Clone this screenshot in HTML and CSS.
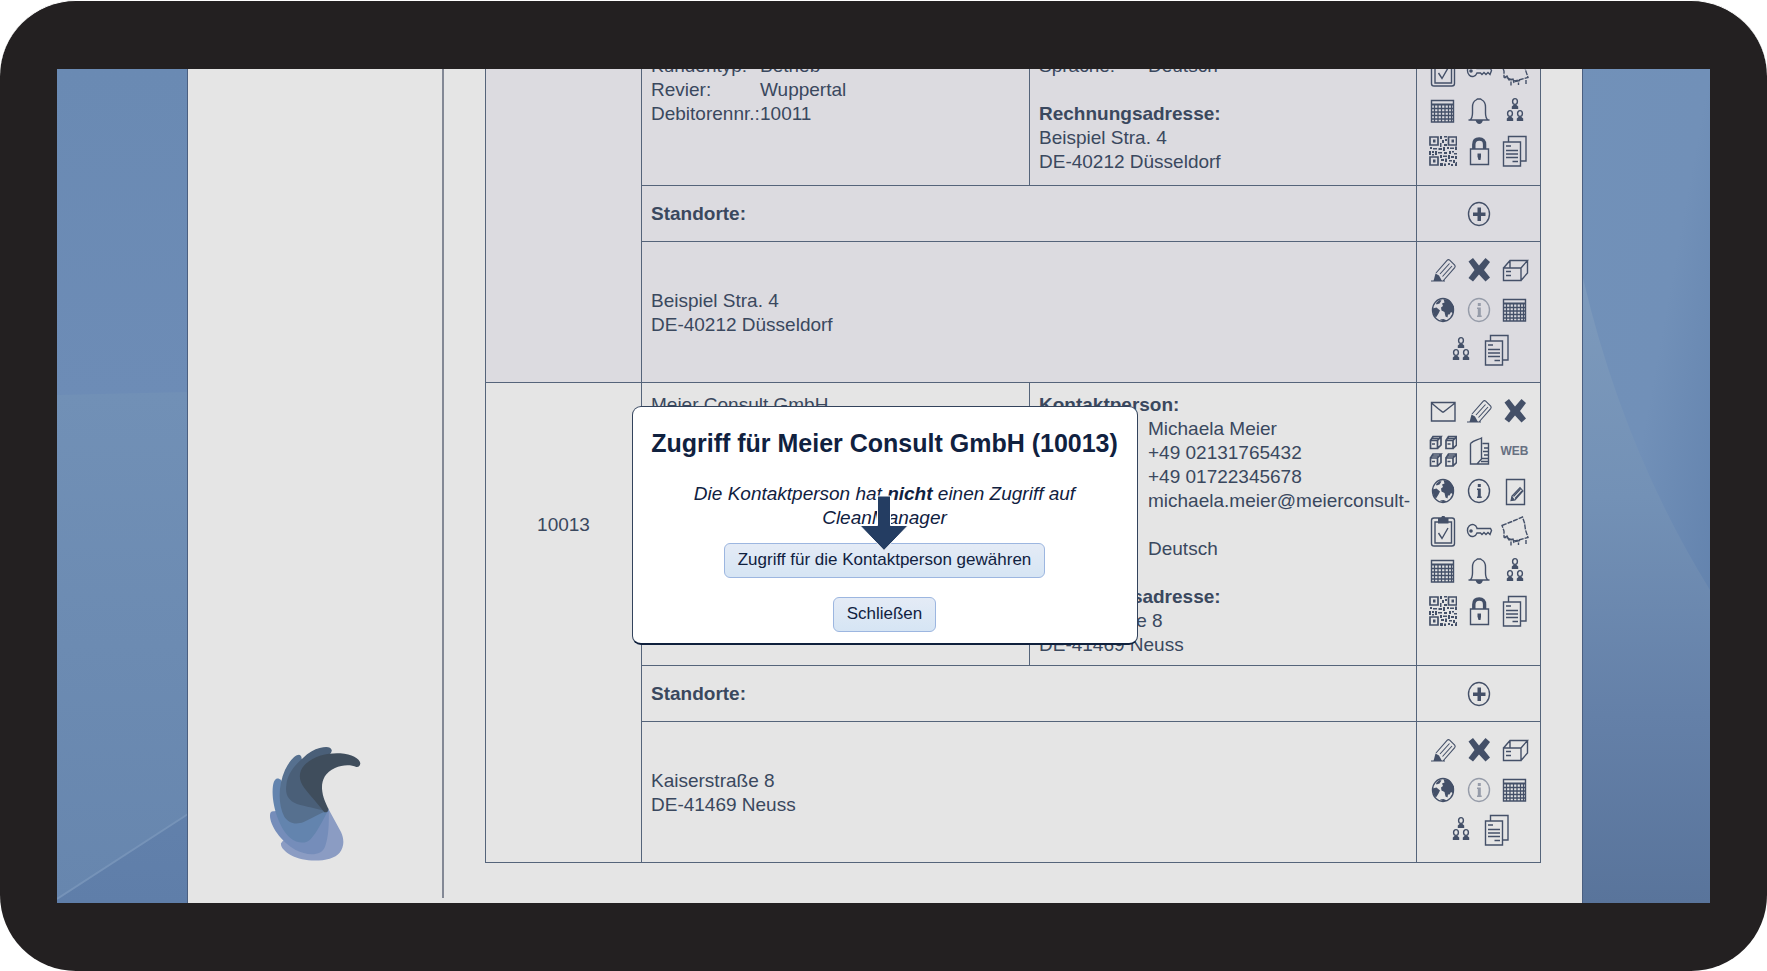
FILE: index.html
```html
<!DOCTYPE html>
<html lang="de">
<head>
<meta charset="utf-8">
<meta name="viewport" content="width=device-width, initial-scale=1">
<title>CleanManager – Kunden</title>
<link rel="stylesheet" href="styles.css">
</head>
<body>

<svg class="sprite" aria-hidden="true">
  <symbol id="i-mail" viewBox="0 0 28 32"><path class="ln" d="M2.500 7.500h23.500v18.500h-23.500zM2.500 8l6.500 5.500 4.500 3.500h1l4.500-3.500L26 8"/></symbol>
  <symbol id="i-pencil" viewBox="0 0 28 32"><path class="ln thin" d="M2 27h14M7 19 18.500 6q1-1 2.200.2l5 5q1 1.200 0 2.500L14 27M11 20 20.500 9.500M13.500 22.500 23 12"/><path class="fl" d="M6.500 19.500l3.500 2L13 27H4.500z"/></symbol>
  <symbol id="i-cross" viewBox="0 0 28 32"><path class="fl" d="M3.500 7.500 8 4l6 7.500L20.500 4l4.500 4-6 8 6 7.500-4.500 4L14 20.500 8 27.500 3.500 24l6-8z"/></symbol>
  <symbol id="i-boxes" viewBox="0 0 28 32"><g id="mini"><path class="ln bold" d="M1.500 5.500h7v8h-7zM1.500 5.500l2.500-4h8l-3.500 4M12 1.500v8.500l-3.500 3.500M3 9h3M3.500 3.500h6"/></g><use href="#mini" x="15.500"/><use href="#mini" y="17.500"/><use href="#mini" x="15.500" y="17.500"/></symbol>
  <symbol id="i-folder" viewBox="0 0 28 32"><path class="ln" d="M5.500 8.500v20.500h18V8.500h-6M5.500 8.500C9 5 13 5 16.500 3v21L12 29M19 13h4M18 16.500h5M19 20h4M17 23.500h6M16 26.500h7"/></symbol>
  <symbol id="i-globe" viewBox="0 0 28 32"><ellipse class="ln" cx="14" cy="16" rx="10.500" ry="11.500"/><path class="fl" d="M14.500 5l6 1.500 4.500 6-.5 7-2.500-1.500-1.500 2.500h-1.500l-.5 3-2-1-1-4.500-3-1.500-.5-3 2-1.500-1-2.500 2.500-1zM3.500 14.500l4-1 3.500 3-1.500 3-2.500 4-2.500-3zM7 9l3.500-3 2 .5-2 3-3 1zM11 25.500l3.500-.5 3.500 1.500-3.500 1z"/></symbol>
  <symbol id="i-info" viewBox="0 0 28 32"><ellipse class="ln" cx="14" cy="16" rx="10.500" ry="11.500"/><path class="fl" d="M12.800 9h3v3h-3zM12 13.500h3.800v8h.9v1.500H12v-1.500h.8V15H12z"/></symbol>
  <symbol id="i-note" viewBox="0 0 28 32"><path class="ln" d="M5.500 4.500h18v25h-18z"/><path class="ln thin" d="M10 25.500l1-4.500L19 12.500l3 3.500-8 9zM12.500 21.500l7-7.500M14 23.500l7-7.500"/><path class="fl" d="M10 25.500l1-4.500 3 4z"/></symbol>
  <symbol id="i-check" viewBox="0 0 28 32"><rect class="ln" x="2.500" y="3" width="23" height="28" rx="2.500"/><path class="ln" d="M6 7h16.500v21H6zM9.500 18l3.500 5.500L19 13"/><path class="fl" d="M9 3h3l1-2h2.500l1 2h3v5.500H9z"/></symbol>
  <symbol id="i-key" viewBox="0 0 28 32"><path class="ln" d="M12 13.500h13.500l1 2-1.500 4-2-2-2 2-2-2-2 2-1.500-1.500H12a5 6 0 1 1 0-5z"/><circle class="fl" cx="6" cy="16" r="1.800"/></symbol>
  <symbol id="i-cloth" viewBox="0 0 28 32"><path class="ln dash" d="M1 10.500 11 6.500 21.500 2l2 6 1 7 2.500 7.500L14 26 3 22 3 16z"/><path class="ln" d="M3 23l3-2 2 4 4-1 1 4M10 26.500v4M17.500 27.500v2.500M25 25v4M14 26.500l5-1"/></symbol>
  <symbol id="i-calendar" viewBox="0 0 28 32"><path class="ln" d="M2.500 5.500h22v21.500h-22z"/><path class="ln thick" d="M2 9.500h23"/><path class="ln grid" d="M5.500 9v18M9 9v18M12.500 9v18M16 9v18M19.500 9v18M22.500 9v18M2 13.500h23M2 17h23M2 20.500h23M2 24h23"/></symbol>
  <symbol id="i-bell" viewBox="0 0 28 32"><path class="ln" d="M3.500 25h21M5 25q2.500-2 2.500-7v-6q0-5 3.500-7l1.500-1h3l1.500 1q3.500 2 3.500 7v6q0 5 2.500 7"/><path class="fl" d="M10.500 25h7.500q-1 4-3.700 4t-3.800-4z"/></symbol>
  <symbol id="i-people" viewBox="0 0 28 32"><g id="man"><ellipse class="ln" cx="14" cy="6.500" rx="2.400" ry="2.900"/><path class="fl" d="M10.800 14v-2.500L13 9.500h2l2.200 2V14z"/></g><use href="#man" x="-5" y="12"/><use href="#man" x="5" y="12"/></symbol>
  <symbol id="i-qr" viewBox="0 0 28 32"><path class="ln bold" d="M1 2h8v8H1zM19.500 2h8v8h-8zM1 22h8v8H1z"/><path class="fl" d="M4 4.500h2.500v3H4zM22.500 4.500H25v3h-2.500zM4 24.500h2.500v3H4zM11 1h2v3h-2zM15 1h3v1.500h-3zM13 5h2v3h-2zM16 4h2v2h-2zM11 8h1.500v4H11zM15 9h3v2h-3zM1 12h2v2H1zM4 13h4v1.500H4zM9.500 13H13v2H9.500zM14 12h2v4h-2zM18 12h2v2h-2zM21 12.500h4V14h-4zM26 11.500h2V15h-2zM0 16h2v4H0zM3 16h2v2H3zM6 16h2v4H6zM9 17h4v1.500H9zM15 17h3v2h-3zM20 16h2v3h-2zM23 16h2v1.500h-2zM25 18h3v1.500h-3zM3 19h2v1.500H3zM11 20h2v3h-2zM14 20.500h4V22h-4zM19 20h2v4h-2zM22 21h3v2h-3zM26 21h2v3h-2zM12 24h3v2h-3zM16 23.500h2V27h-2zM20 25h3v1.500h-3zM24 25h2v3h-2zM11 28h3v3h-3zM15 28.500h2V31h-2zM19 28h2v2h-2zM22 29h2v2h-2zM27 27h1v4h-2v-2z"/></symbol>
  <symbol id="i-lock" viewBox="0 0 28 32"><path class="ln" d="M5.500 14h18v15.500h-18z"/><path class="ln shackle" d="M8.800 14V9.500q0-5.500 5.400-5.500t5.400 5.500V14"/><path class="fl" d="M12.500 18.500H16v3l-.5 3.500h-2l-1-3.500z"/></symbol>
  <symbol id="i-docs" viewBox="0 0 28 32"><path class="ln" d="M2.500 7h17v24h-17zM7.500 7V1.500h17.500V26h-5M5 11h5M5 15.500h12M5 19h12M5 22.500h12M11.500 26.500h5.500"/></symbol>
  <symbol id="i-plus" viewBox="0 0 28 32"><ellipse class="ln" cx="14" cy="16" rx="10.500" ry="11.500"/><path class="fl" d="M12.500 9.500H16v5h4.500V18H16v5h-3.500v-5H8v-3.500h4.500z"/></symbol>
  <symbol id="i-box" viewBox="0 0 28 32"><path class="ln" d="M2.500 14h17.500V26.500H2.500zM2.500 14 9 6.500h17.500L20 14M26.500 6.500v12.500L20 26.500M9 6.500V14M5 17.500h5M5 21.500h5"/></symbol>
</svg>

<div class="device">
  <div class="screen">
    <svg class="wallpaper" viewBox="0 0 1653 834" preserveAspectRatio="none" aria-hidden="true">
      <defs>
        <linearGradient id="sky" x1="0" y1="0" x2="0" y2="1"><stop offset="0" stop-color="#6a8ab3"/><stop offset=".4" stop-color="#6d8cb6"/><stop offset="1" stop-color="#5f7ea9"/></linearGradient>
        <linearGradient id="haze" x1="0" y1="0" x2="0" y2="1"><stop offset="0" stop-color="#7190b6"/><stop offset="1" stop-color="#6786ae"/></linearGradient>
        <linearGradient id="east" x1="0" y1="0" x2="1" y2="1"><stop offset="0" stop-color="#7191b9"/><stop offset=".5" stop-color="#7190b8"/><stop offset="1" stop-color="#5c7ca8"/></linearGradient>
        <linearGradient id="hill" x1="0" y1="0" x2="0" y2="1"><stop offset="0" stop-color="#7d9abc"/><stop offset=".35" stop-color="#7391b6"/><stop offset=".7" stop-color="#6480a8"/><stop offset="1" stop-color="#59749b"/></linearGradient>
      </defs>
      <rect width="900" height="834" fill="url(#sky)"/>
      <path d="M0 326 131 323V745L0 830z" fill="url(#haze)"/>
      <path d="M0 830 131 745" stroke="#7693b8" stroke-width="2"/>
      <rect x="1500" width="153" height="834" fill="url(#east)"/>
      <path d="M1526 209Q1566 380 1653 521V834H1500V209z" fill="url(#hill)"/>
    </svg>

    <div class="page">
      <aside class="sidebar">
        <svg class="logo" viewBox="120 134 276 348" role="img" aria-label="CleanManager">
          <path fill="#8b9cc3" d="M298 322 336 392C346 414 346 436 332 454C310 482 230 486 186 462C168 452 154 438 156 426L162 418 200 400z"/>
          <path fill="#758dba" d="M299 322C301 370 298 410 288 436C278 464 236 464 200 446C156 422 122 372 123 342C123 332 128 328 136 330L200 320z"/>
          <path fill="#6384ae" d="M298 326C280 360 262 396 246 412C230 430 204 426 184 410C150 380 128 310 131 262C133 236 140 230 150 232Q158 234 160 244L220 280z"/>
          <path fill="#56708f" d="M298 328C270 336 250 350 224 362C198 372 178 364 166 346C146 310 148 250 168 206C182 176 200 160 210 160Q218 162 218 172L240 240z"/>
          <path fill="#4a5f78" d="M296 332C262 320 230 316 204 308C178 298 168 280 172 252C174 222 192 196 222 170C238 154 256 144 272 140Q304 132 308 146Q310 154 300 160L260 240z"/>
          <path fill="#3f4d5c" d="M286 333C266 306 246 286 226 260C208 236 208 212 226 192C254 162 300 154 334 156C368 158 392 172 394 186Q393 198 382 197C366 190 340 190 318 200C288 214 278 236 279 262C281 288 290 304 298 322Q298 334 286 333z"/>
        </svg>
      </aside>

      <main class="content">
        <table class="customers">
          <colgroup><col class="c-id"><col class="c-data"><col><col class="c-tools"></colgroup>
          <tbody class="shaded">
            <tr class="head">
              <th rowspan="3" scope="rowgroup" aria-label="10011"></th>
              <td>
                <dl class="facts">
                  <dt>Kundentyp:</dt><dd>Betrieb</dd>
                  <dt>Revier:</dt><dd>Wuppertal</dd>
                  <dt>Debitorennr.:</dt><dd>10011</dd>
                </dl>
              </td>
              <td>
                <dl class="facts"><dt>Sprache:</dt><dd>Deutsch</dd></dl>
                <p class="address"><strong>Rechnungsadresse:</strong><br>Beispiel Stra. 4<br>DE-40212 Düsseldorf</p>
              </td>
              <td><div class="tools">
                <button aria-label="Aufgaben"><svg><use href="#i-check"/></svg></button>
                <button aria-label="Zugriff"><svg><use href="#i-key"/></svg></button>
                <button aria-label="Reinigung"><svg><use href="#i-cloth"/></svg></button>
                <button aria-label="Kalender"><svg><use href="#i-calendar"/></svg></button>
                <button aria-label="Erinnerung"><svg><use href="#i-bell"/></svg></button>
                <button aria-label="Mitarbeiter"><svg><use href="#i-people"/></svg></button>
                <button aria-label="QR-Code"><svg><use href="#i-qr"/></svg></button>
                <button aria-label="Sperren"><svg><use href="#i-lock"/></svg></button>
                <button aria-label="Dokumente"><svg><use href="#i-docs"/></svg></button>
              </div></td>
            </tr>
            <tr class="sites">
              <td colspan="2"><strong>Standorte:</strong></td>
              <td><div class="tools"><button aria-label="Standort hinzufügen"><svg><use href="#i-plus"/></svg></button></div></td>
            </tr>
            <tr class="site">
              <td colspan="2">Beispiel Stra. 4<br>DE-40212 Düsseldorf</td>
              <td><div class="tools">
                <button aria-label="Bearbeiten"><svg><use href="#i-pencil"/></svg></button>
                <button aria-label="Löschen"><svg><use href="#i-cross"/></svg></button>
                <button aria-label="Objekt"><svg><use href="#i-box"/></svg></button>
                <button aria-label="Karte"><svg><use href="#i-globe"/></svg></button>
                <button aria-label="Information" disabled><svg><use href="#i-info"/></svg></button>
                <button aria-label="Kalender"><svg><use href="#i-calendar"/></svg></button>
                <button aria-label="Mitarbeiter"><svg><use href="#i-people"/></svg></button>
                <button aria-label="Dokumente"><svg><use href="#i-docs"/></svg></button>
              </div></td>
            </tr>
          </tbody>
          <tbody>
            <tr class="customer">
              <th scope="row">10013</th>
              <td>Meier Consult GmbH</td>
              <td>
                <strong>Kontaktperson:</strong>
                <dl class="facts">
                  <dd>Michaela Meier</dd>
                  <dd>+49 02131765432</dd>
                  <dd>+49 01722345678</dd>
                  <dd class="mail">michaela.meier@meierconsult-</dd>
                  <dd>Deutsch</dd>
                </dl>
                <p class="address"><strong>Rechnungsadresse:</strong><br>Kaiserstraße 8<br>DE-41469 Neuss</p>
              </td>
              <td><div class="tools">
                <button aria-label="E-Mail"><svg><use href="#i-mail"/></svg></button>
                <button aria-label="Bearbeiten"><svg><use href="#i-pencil"/></svg></button>
                <button aria-label="Löschen"><svg><use href="#i-cross"/></svg></button>
                <button aria-label="Objekte"><svg><use href="#i-boxes"/></svg></button>
                <button aria-label="Akte"><svg><use href="#i-folder"/></svg></button>
                <button class="web">WEB</button>
                <button aria-label="Karte"><svg><use href="#i-globe"/></svg></button>
                <button aria-label="Information"><svg><use href="#i-info"/></svg></button>
                <button aria-label="Notiz"><svg><use href="#i-note"/></svg></button>
                <button aria-label="Aufgaben"><svg><use href="#i-check"/></svg></button>
                <button aria-label="Zugriff"><svg><use href="#i-key"/></svg></button>
                <button aria-label="Reinigung"><svg><use href="#i-cloth"/></svg></button>
                <button aria-label="Kalender"><svg><use href="#i-calendar"/></svg></button>
                <button aria-label="Erinnerung"><svg><use href="#i-bell"/></svg></button>
                <button aria-label="Mitarbeiter"><svg><use href="#i-people"/></svg></button>
                <button aria-label="QR-Code"><svg><use href="#i-qr"/></svg></button>
                <button aria-label="Sperren"><svg><use href="#i-lock"/></svg></button>
                <button aria-label="Dokumente"><svg><use href="#i-docs"/></svg></button>
              </div></td>
            </tr>
            <tr class="sites">
              <td class="blank" rowspan="2"></td>
              <td colspan="2"><strong>Standorte:</strong></td>
              <td><div class="tools"><button aria-label="Standort hinzufügen"><svg><use href="#i-plus"/></svg></button></div></td>
            </tr>
            <tr class="site">
              <td colspan="2">Kaiserstraße 8<br>DE-41469 Neuss</td>
              <td><div class="tools">
                <button aria-label="Bearbeiten"><svg><use href="#i-pencil"/></svg></button>
                <button aria-label="Löschen"><svg><use href="#i-cross"/></svg></button>
                <button aria-label="Objekt"><svg><use href="#i-box"/></svg></button>
                <button aria-label="Karte"><svg><use href="#i-globe"/></svg></button>
                <button aria-label="Information" disabled><svg><use href="#i-info"/></svg></button>
                <button aria-label="Kalender"><svg><use href="#i-calendar"/></svg></button>
                <button aria-label="Mitarbeiter"><svg><use href="#i-people"/></svg></button>
                <button aria-label="Dokumente"><svg><use href="#i-docs"/></svg></button>
              </div></td>
            </tr>
          </tbody>
        </table>
      </main>
    </div>

    <div class="overlay">
      <section class="dialog" role="dialog" aria-labelledby="dialog-title">
        <h2 id="dialog-title">Zugriff für Meier Consult GmbH (10013)</h2>
        <p class="message">Die Kontaktperson hat <strong>nicht</strong> einen Zugriff auf CleanManager</p>
        <button class="btn">Zugriff für die Kontaktperson gewähren</button>
        <button class="btn">Schließen</button>
        <svg class="pointer" viewBox="0 0 50 58" aria-hidden="true"><path d="M18.500 2h13v29.500H49L25 56.500 1 31.500h17.500z"/></svg>
      </section>
    </div>
  </div>
</div>
</body>
</html>
```
FILE: styles.css
```css
* { box-sizing: border-box; }

body {
  margin: 0;
  background: #fff;
  color: #3a485e;
  font: 19px/24px "Liberation Sans", Arial, sans-serif;
}

.sprite { position: absolute; width: 0; height: 0; }

/* device frame */
.device {
  display: flex;
  height: 100vh;
  padding: 68px 57px;
  border-top: 1px solid #fff;
  border-radius: 76px;
  background: #232021;
}

.screen {
  position: relative;
  display: flex;
  flex: 1;
  overflow: hidden;
}

.wallpaper { position: absolute; inset: 0; width: 100%; height: 100%; }

/* application page */
.page {
  position: relative;
  display: flex;
  flex: 1;
  margin: 0 127px 0 130px;
  border: solid #4b5f80;
  border-width: 0 1px;
  background: #e5e5e5;
}

.sidebar {
  display: flex;
  flex: 0 0 256px;
  flex-direction: column;
  justify-content: flex-end;
  align-items: center;
  margin-bottom: 5px;
  padding-bottom: 36px;
  border-right: 2px solid #838895;
}

.logo { width: 92px; height: 116px; }

.content {
  display: flex;
  flex: 1;
  flex-direction: column;
  justify-content: flex-end;
  padding: 0 41px 40px;
}

/* customer table */
.customers {
  width: 100%;
  table-layout: fixed;
  border-collapse: collapse;
}

.c-id { width: 156px; }
.c-data { width: 388px; }
.c-tools { width: 124px; }

.shaded { background: #dcdbe0; }

.customers td,
.customers th {
  padding: 10px 9px 8px;
  border: 1px solid #55647a;
  font-weight: normal;
  text-align: left;
}

.customers td:last-child { padding: 0; }
.customers tr.head td { padding-top: 14px; vertical-align: top; }
.customers tr.head td:last-child { padding-top: 11px; }
.customers tr.customer td { vertical-align: top; }
.customers tr.customer th { border-bottom: 0; text-align: center; }
.customers td.blank { border-top: 0; }
.sites { height: 56px; }
.customers tr.sites td { padding-top: 0; padding-bottom: 0; }

.facts {
  display: grid;
  grid-template-columns: 109px 1fr;
  margin: 0;
}

.facts dd { grid-column: 2; margin: 0; white-space: nowrap; }
.facts .mail { padding-bottom: 24px; }
.address { margin: 24px 0 0; }

.tools {
  display: flex;
  flex-wrap: wrap;
  justify-content: center;
  width: 108px;
  margin: 0 auto;
}

.customer .tools, .site .tools { padding: 8px 0 12px; }
.head .tools { padding: 0 0 14px; }

.tools button {
  display: flex;
  justify-content: center;
  align-items: center;
  width: 36px;
  height: 40px;
  padding: 0;
  border: 0;
  background: none;
  color: #445068;
}

.tools button:disabled { color: #969ca9; }
.tools svg { flex: none; width: 28px; height: 32px; }
.tools .web { color: #677081; font: bold 12px/16px "Liberation Sans", Arial, sans-serif; }

.ln { fill: none; stroke: currentColor; stroke-width: 1.4; }
.ln.bold { stroke-width: 1.7; }
.ln.thick { stroke-width: 2; }
.ln.grid { stroke-width: 1.3; }
.ln.thin { stroke-width: 1.1; }
.ln.shackle { stroke-width: 3.4; }
.ln.dash { stroke-dasharray: 5 1; }
.fl { fill: currentColor; }

/* dialog */
.overlay {
  position: absolute;
  inset: 0;
  display: flex;
  justify-content: center;
  align-items: center;
  padding: 79px 0 0 2px;
}

.dialog {
  position: relative;
  display: flex;
  flex-direction: column;
  align-items: center;
  width: 506px;
  padding: 20px 16px 11px;
  border: 1px solid #33435c;
  border-bottom: 2px solid #0f203c;
  border-radius: 9px;
  background: #fff;
  color: #10213f;
}

.dialog h2 { margin: 0; font-size: 25px; line-height: 32px; white-space: nowrap; }
.message { width: 400px; margin: 23px 0 13px; font-style: italic; text-align: center; }

.btn {
  height: 35px;
  padding: 0 13px 2px;
  border: 1px solid #9cb6e0;
  border-radius: 6px;
  background: linear-gradient(#e4ebf6, #d6e5f4);
  color: #10213f;
  font-family: inherit;
  font-size: 17px;
}

.btn + .btn { margin-top: 19px; }

.pointer {
  position: absolute;
  top: 87px;
  left: 226px;
  width: 50px;
  height: 58px;
  fill: #243d62;
  stroke: #fff;
  stroke-width: 1;
}
```
